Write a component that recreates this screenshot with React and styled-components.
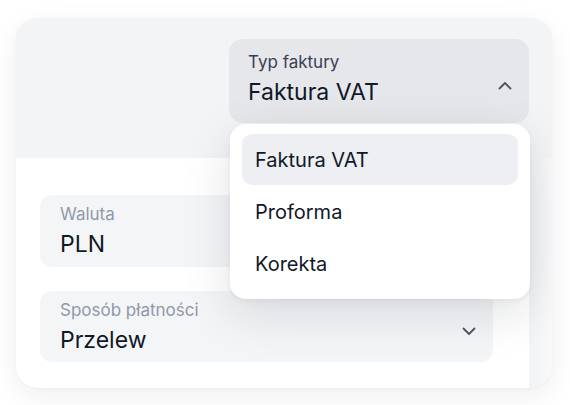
import React from "react";
import styled, { createGlobalStyle } from "styled-components";

const Global = createGlobalStyle`
  html, body { margin: 0; padding: 0; background: #ffffff; }
  body { font-family: Inter, "Noto Sans", sans-serif; -webkit-font-smoothing: antialiased; }
  * { box-sizing: border-box; }
`;

const Page = styled.div`
  width: 570px;
  height: 405px;
  padding: 18px 18px 0 16px;
`;

const Card = styled.div`
  position: relative;
  width: 536px;
  height: 370px;
  border-radius: 22px;
  background: #f3f4f6;
  box-shadow: 0 8px 28px rgba(15, 23, 42, 0.07), 0 1px 3px rgba(15, 23, 42, 0.04);
  display: flex;
  flex-direction: column;
  overflow: hidden;
`;

const Header = styled.div`
  height: 140px;
  padding: 21px 23px 0 0;
  display: flex;
  justify-content: flex-end;
  align-items: flex-start;
`;

const SelectWrap = styled.div`
  position: relative;
  width: 300px;
  z-index: 2;
`;

const Trigger = styled.div`
  height: 84px;
  border-radius: 14px;
  background: #e5e7eb;
  padding: 13px 16px 0 19px;
  display: flex;
  align-items: center;
  justify-content: space-between;
`;

const Texts = styled.div`
  display: flex;
  flex-direction: column;
  align-self: flex-start;
`;

const Label = styled.div`
  font-size: 17px;
  line-height: 20px;
  color: ${(p) => (p.$dark ? "#374151" : "#8f99a8")};
`;

const Value = styled.div`
  margin-top: 6px;
  font-size: 23px;
  line-height: 28px;
  color: #111827;
`;

const Menu = styled.div`
  position: absolute;
  top: 85px;
  left: 1px;
  width: 300px;
  padding: 10px 12px 10px;
  border-radius: 16px;
  background: #ffffff;
  box-shadow: 0 14px 48px rgba(15, 23, 42, 0.13), 0 2px 6px rgba(15, 23, 42, 0.05);
  display: flex;
  flex-direction: column;
`;

const Item = styled.div`
  height: 51px;
  padding-left: 13px;
  display: flex;
  align-items: center;
  border-radius: 10px;
  font-size: 20px;
  color: #111827;
  background: ${(p) => (p.$active ? "#eeeff2" : "transparent")};
  & + & { margin-top: 1px; }
`;

const Body = styled.div`
  flex: 1;
  display: flex;
`;

const Panel = styled.div`
  width: 513px;
  background: #ffffff;
  padding: 37px 0 0 24px;
  display: flex;
  flex-direction: column;
  gap: 24px;
`;

const Strip = styled.div`
  flex: 1;
  background: linear-gradient(90deg, #f2f3f6, #f8f9fa);
`;

const Field = styled.div`
  width: 453px;
  height: ${(p) => p.$h}px;
  border-radius: 12px;
  background: #f4f5f7;
  padding: 9px 16px 0 20px;
  display: flex;
  align-items: center;
  justify-content: space-between;
`;

const Chevron = ({ up }) => (
  <svg width="16" height="16" viewBox="0 0 16 16" fill="none" style={{ marginTop: up ? -4 : 0 }}>
    <path
      d={up ? "M2.5 10.5 L8 5 L13.5 10.5" : "M2.5 5.5 L8 11 L13.5 5.5"}
      stroke="#4b5563"
      strokeWidth="1.8"
      strokeLinecap="round"
      strokeLinejoin="round"
    />
  </svg>
);

export default function App() {
  return (
    <Page>
      <Global />
      <Card>
        <Header>
          <SelectWrap>
            <Trigger>
              <Texts>
                <Label $dark>Typ faktury</Label>
                <Value>Faktura VAT</Value>
              </Texts>
              <Chevron up />
            </Trigger>
            <Menu>
              <Item $active>Faktura VAT</Item>
              <Item>Proforma</Item>
              <Item>Korekta</Item>
            </Menu>
          </SelectWrap>
        </Header>
        <Body>
          <Panel>
            <Field $h={72}>
              <Texts>
                <Label>Waluta</Label>
                <Value>PLN</Value>
              </Texts>
            </Field>
            <Field $h={71}>
              <Texts>
                <Label>Sposób płatności</Label>
                <Value>Przelew</Value>
              </Texts>
              <Chevron />
            </Field>
          </Panel>
          <Strip />
        </Body>
      </Card>
    </Page>
  );
}
